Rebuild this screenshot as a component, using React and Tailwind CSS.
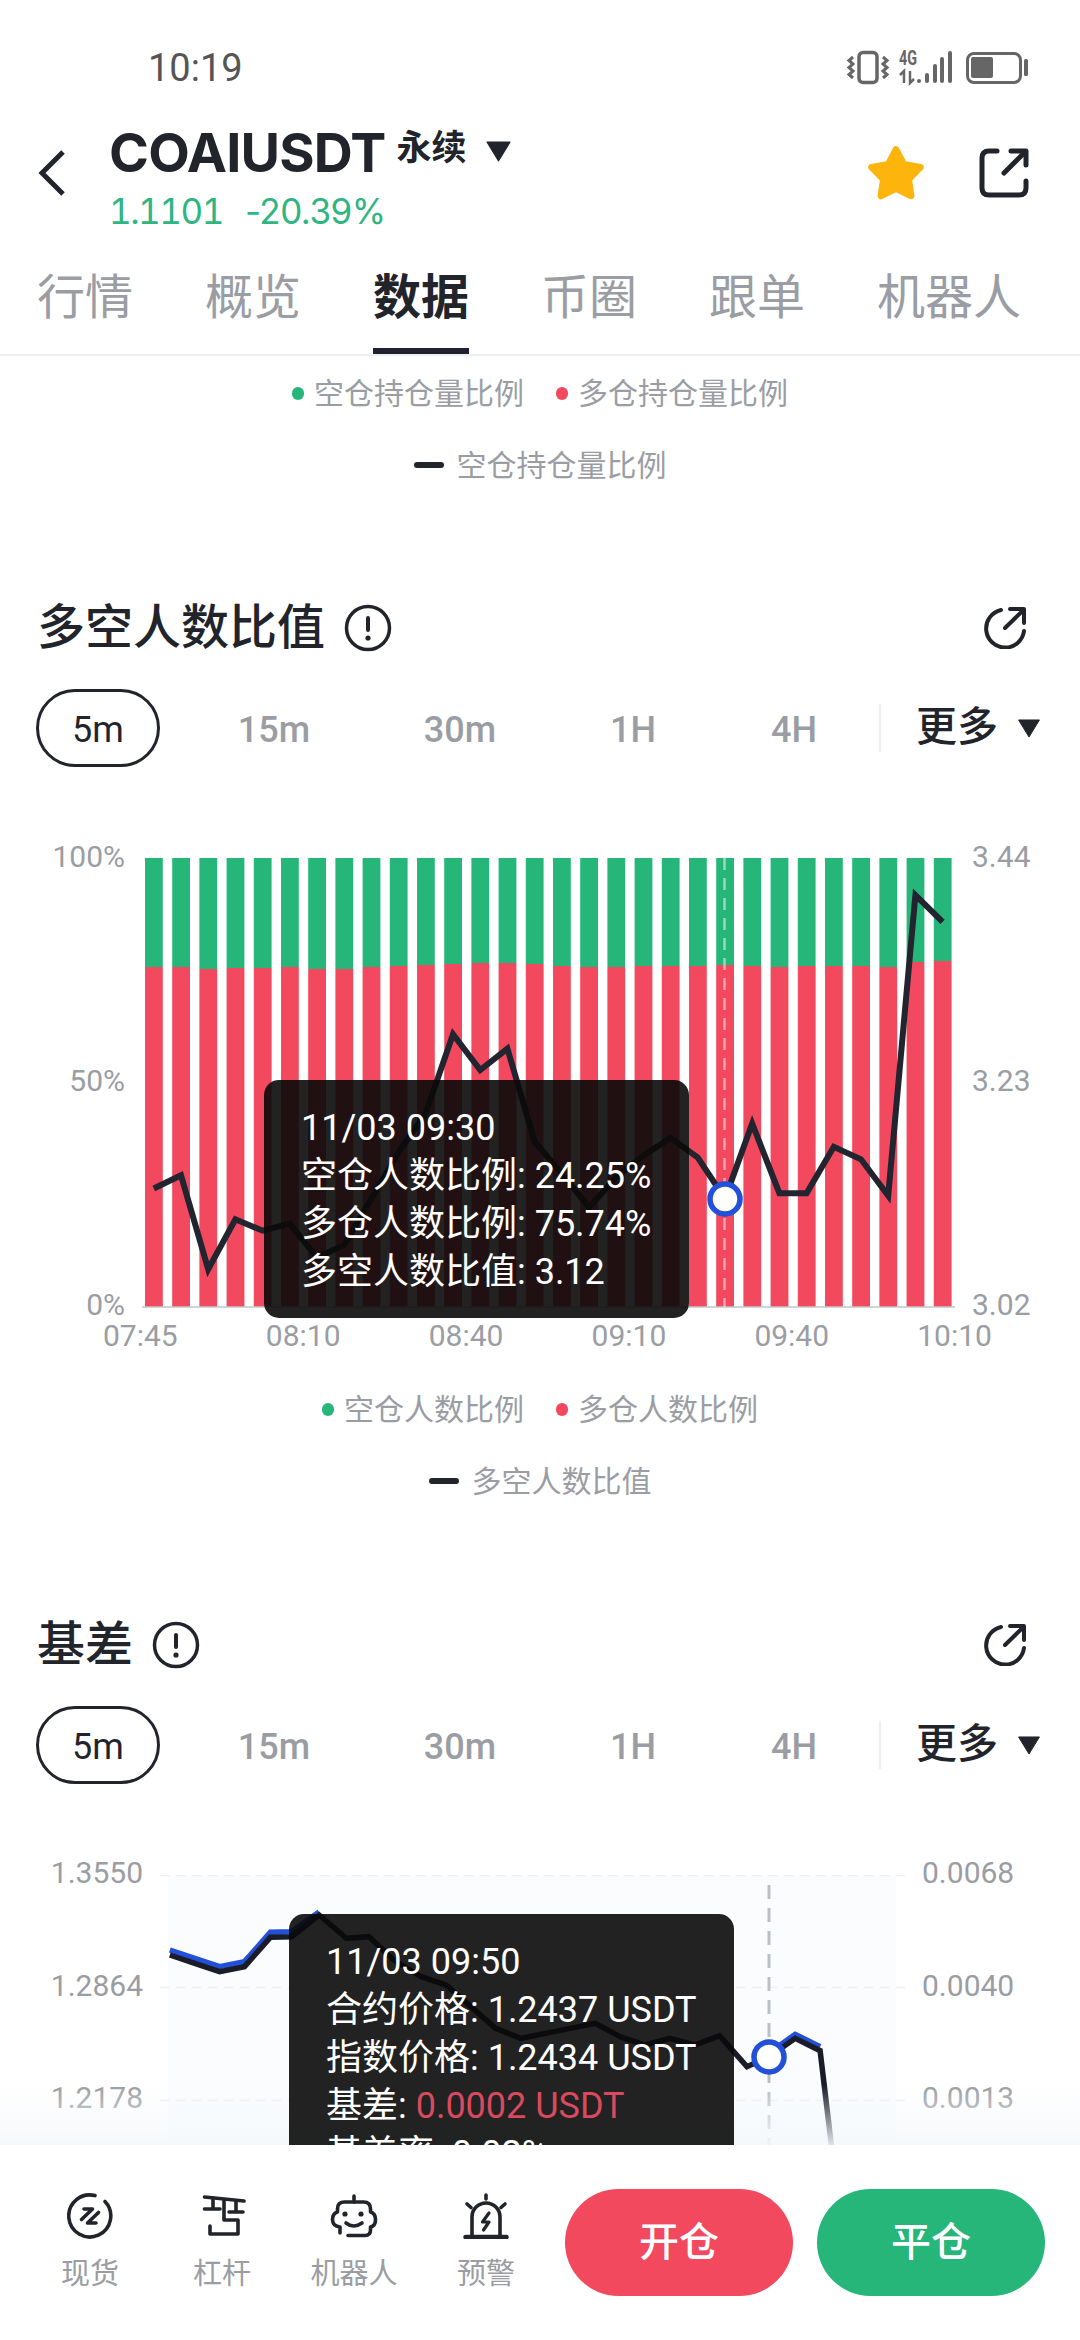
import React from "react";

const CJK = '"Noto Sans CJK SC"';
const sans = { fontFamily: `Roboto, ${CJK}, sans-serif` };

const splits = [967,967,969,968,968,967,969,969,967,966,965,964,963,963,964,966,967,967,966,966,966,965,966,967,966,966,966,967,962,961];
const barX = (i) => 145 + 27.2 * i;
const lineV = [1032,995,1258,1118,1150,1130,1225,1190,1060,930,820,600,700,640,900,990,1085,1000,940,890,945,1060,850,1045,1045,915,950,1052,210,285];
const line1 = lineV.map((v, i) => `${153.8 + 27.2 * i},${820 + v / 2.8}`).join(" ");

const raw2 = [[60,285],[110,310],[160,335],[210,320],[262,232],[305,230],[360,165],[415,235],[460,230],[510,300],[565,350],[615,375],[665,440],[715,505],[765,535],[815,520],[865,505],[915,490],[965,530],[1015,555],[1065,535],[1115,555],[1165,527],[1220,620],[1265,590],[1317,535],[1367,572],[1390,860],[1400,1100]];
const pts2 = raw2.map(([x, y]) => [140 + x / 2.01, 1860 + y / 3]);
const line2 = pts2.map((p) => p.join(",")).join(" ");
const line2b = pts2.slice(0, 7).map(([x, y], i) => `${x},${y - (i === 6 ? 3 : 5)}`).join(" ");
const line2c = pts2.slice(24, 27).map(([x, y]) => `${x},${y - 4}`).join(" ");

function Tri({ className }) {
  return (
    <svg viewBox="0 0 24 20" className={className}>
      <path d="M1 1 H23 L12 19 Z" fill="#22242b" stroke="#22242b" strokeWidth="1" strokeLinejoin="round" />
    </svg>
  );
}

function StatusIcons() {
  return (
    <svg viewBox="845 46 186 40" className="w-[186px] h-[40px]">
      <rect x="859" y="51.5" width="18" height="30" rx="4" fill="none" stroke="#666" strokeWidth="3.5" />
      <path d="M853 56 L849 59.5 L853 63 L849 66.5 L853 70 L849 73.5 L853 77" fill="none" stroke="#666" strokeWidth="3" />
      <path d="M883 56 L887 59.5 L883 63 L887 66.5 L883 70 L887 73.5 L883 77" fill="none" stroke="#666" strokeWidth="3" />
      <text x="899" y="63.5" fontSize="20" fontWeight="700" fill="#666" fontFamily="Roboto" textLength="18" lengthAdjust="spacingAndGlyphs">4G</text>
      <path d="M904 82 V70 L900 74 M910 70 V82 L914 78" fill="none" stroke="#666" strokeWidth="2.5" />
      {[[919,78],[927,72],[935,63],[942,56],[950,50]].map(([x, y]) => (
        <rect key={x} x={x - 2} y={y} width="4" height={82 - y} rx="2" fill="#666" />
      ))}
      <rect x="967.5" y="52.5" width="53" height="29" rx="6.5" fill="none" stroke="#666" strokeWidth="3" />
      <rect x="971" y="56" width="22" height="21" rx="2" fill="#666" />
      <rect x="1024" y="58" width="4" height="17" rx="1.5" fill="#666" />
    </svg>
  );
}

function BackIcon() {
  return (
    <svg viewBox="0 0 28 46" className="w-[28px] h-[46px]">
      <path d="M25 2 L4 23 L25 44" fill="none" stroke="#22242b" strokeWidth="5" />
    </svg>
  );
}

function Star() {
  return (
    <svg viewBox="2 2 52 50" className="w-[56px] h-[54px]">
      <polygon points="28,5 35.3,18.9 50.8,21.6 39.9,32.9 42.1,48.4 28,41.5 13.9,48.4 16.1,32.9 5.2,21.6 20.7,18.9" fill="#fdb50e" stroke="#fdb50e" strokeWidth="6" strokeLinejoin="round" />
    </svg>
  );
}

function ShareIcon() {
  return (
    <svg viewBox="0 0 50 50" className="w-[50px] h-[50px]" fill="none" stroke="#22242b" strokeWidth="5" strokeLinecap="round" strokeLinejoin="round">
      <path d="M18 3 H10 Q3 3 3 10 V40 Q3 47 10 47 H40 Q47 47 47 40 V33" />
      <path d="M32 3 H47 V17" />
      <path d="M25 25 L46 4" />
    </svg>
  );
}

function InfoIcon() {
  return (
    <svg viewBox="0 0 48 48" className="w-[48px] h-[48px]">
      <circle cx="24" cy="24" r="21.5" fill="none" stroke="#22242b" strokeWidth="3.5" />
      <rect x="22" y="12" width="4" height="16" rx="2" fill="#22242b" />
      <circle cx="24" cy="34" r="2.6" fill="#22242b" />
    </svg>
  );
}

function OpenIcon() {
  return (
    <svg viewBox="0 0 42 42" className="w-[42px] h-[42px]" fill="none" stroke="#22242b" strokeWidth="4" strokeLinecap="round" strokeLinejoin="round">
      <path d="M17 3 A19 19 0 1 0 40 24" />
      <path d="M26 2 H40 V16" />
      <path d="M21 21 L39 3.5" />
    </svg>
  );
}

function SectionHead({ title }) {
  return (
    <div className="h-[60px] flex items-center pl-[37px] pr-[54px]">
      <span className="text-[48px] leading-[60px] font-medium text-[#22242b]" style={sans}>{title}</span>
      <span className="ml-[19px] flex"><InfoIcon /></span>
      <span className="ml-auto flex"><OpenIcon /></span>
    </div>
  );
}

function TimeRow() {
  const t = "text-[36px] pt-[4px] text-center font-medium text-[#9a9da3]";
  return (
    <div className="h-[78px] flex items-center pl-[36px]" style={sans}>
      <div className="w-[124px] h-[78px] pt-[3px] rounded-full border-[3px] border-[#22242b] flex items-center justify-center text-[36px] text-[#22242b]">5m</div>
      <div className={`${t} w-[228px]`}>15m</div>
      <div className={`${t} w-[144px]`}>30m</div>
      <div className={`${t} w-[202px]`}>1H</div>
      <div className={`${t} w-[120px]`}>4H</div>
      <div className="ml-[25px] w-[2px] h-[48px] bg-[#eceef0]" />
      <div className="ml-[35px] text-[41px] font-medium text-[#22242b]">更多</div>
      <Tri className="ml-[19px] w-[24px] h-[19px]" />
    </div>
  );
}

function Legend({ items, dash }) {
  return (
    <div className="h-[40px] flex items-center justify-center gap-[32px] text-[30px] text-[#9a9da3]" style={sans}>
      {items && items.map(([c, label]) => (
        <div key={label} className="flex items-center gap-[10px]">
          <span className={`w-[12px] h-[13px] rounded-full ${c}`} />
          <span>{label}</span>
        </div>
      ))}
      {dash && (
        <div className="flex items-center gap-[13px]">
          <span className="w-[30px] h-[6px] rounded-full bg-[#22242b]" />
          <span>{dash}</span>
        </div>
      )}
    </div>
  );
}

function Tooltip({ className, children }) {
  return (
    <div className={`absolute z-10 rounded-[15px] bg-[rgba(10,10,10,0.9)] pl-[37px] pt-[24px] text-[36px] leading-[48px] text-white whitespace-nowrap ${className}`} style={sans}>
      {children}
    </div>
  );
}

function Chart1() {
  const lab = "h-[40px] text-[30px] leading-[40px] text-[#9a9da3]";
  return (
    <div className="relative">
      <div className="flex items-start h-[450px]" style={sans}>
        <div className="w-[142px] pr-[17px] h-[488px] -mt-[21px] flex flex-col justify-between text-right shrink-0">
          <div className={lab}>100%</div><div className={lab}>50%</div><div className={lab}>0%</div>
        </div>
        <svg viewBox="142 858 813 450" className="w-[813px] h-[450px] shrink-0">
          {splits.map((s, i) => (
            <g key={i}>
              <rect x={barX(i)} y="858" width="17.8" height={s - 858} fill="#26b67a" />
              <rect x={barX(i)} y={s} width="17.8" height={1307 - s} fill="#f3495f" />
            </g>
          ))}
          <line x1="142" x2="955" y1="1307" y2="1307" stroke="#c4c6ca" strokeWidth="1.5" />
          <line x1="724.5" x2="724.5" y1="858" y2="1307" stroke="rgba(255,255,255,0.5)" strokeWidth="2.5" strokeDasharray="12 8" />
          <polyline points={line1} fill="none" stroke="#22242f" strokeWidth="6" strokeLinejoin="miter" />
          <circle cx="725" cy="1199" r="15" fill="#fff" stroke="#2350d8" strokeWidth="5.5" />
        </svg>
        <div className="pl-[17px] h-[488px] -mt-[21px] flex flex-col justify-between">
          <div className={lab}>3.44</div><div className={lab}>3.23</div><div className={lab}>3.02</div>
        </div>
      </div>
      <div className="ml-[103px] w-[889px] mt-[8px] flex justify-between h-[40px] text-[30px] leading-[40px] text-[#9a9da3]" style={sans}>
        {["07:45","08:10","08:40","09:10","09:40","10:10"].map((t) => <span key={t}>{t}</span>)}
      </div>
      <Tooltip className="left-[264px] top-[222px] w-[425px] h-[238px]">
        <div>11/03 09:30</div>
        <div>空仓人数比例: 24.25%</div>
        <div>多仓人数比例: 75.74%</div>
        <div>多空人数比值: 3.12</div>
      </Tooltip>
    </div>
  );
}

function Chart2() {
  const lab = "h-[40px] text-[30px] leading-[40px] text-[#9a9da3]";
  return (
    <div className="relative flex items-start" style={sans}>
      <div className="w-[160px] pr-[17px] -mt-[22px] flex flex-col gap-[72.5px] text-right shrink-0">
        <div className={lab}>1.3550</div><div className={lab}>1.2864</div><div className={lab}>1.2178</div>
      </div>
      <svg viewBox="160 1875 745 340" className="w-[745px] h-[340px] shrink-0">
        <rect x="168" y="1875" width="728" height="340" fill="#fafcfe" />
        {[1875.5, 1987.5, 2100.5].map((y) => (
          <line key={y} x1="160" x2="905" y1={y} y2={y} stroke="#eef0f3" strokeWidth="1.5" strokeDasharray="10 6" />
        ))}
        <line x1="769" x2="769" y1="1885" y2="2145" stroke="#b9bfc7" strokeWidth="3" strokeDasharray="14 9" />
        <polyline points={line2b} fill="none" stroke="#2350d8" strokeWidth="5.5" />
        <polyline points={line2c} fill="none" stroke="#2350d8" strokeWidth="5.5" />
        <polyline points={line2} fill="none" stroke="#1a1c28" strokeWidth="5.5" />
        <circle cx="769" cy="2057" r="15" fill="#fff" stroke="#2350d8" strokeWidth="5.5" />
      </svg>
      <div className="pl-[17px] -mt-[22px] flex flex-col gap-[72.5px]">
        <div className={lab}>0.0068</div><div className={lab}>0.0040</div><div className={lab}>0.0013</div>
      </div>
      <Tooltip className="left-[289px] top-[39px] w-[445px] h-[290px]">
        <div>11/03 09:50</div>
        <div>合约价格: 1.2437 USDT</div>
        <div>指数价格: 1.2434 USDT</div>
        <div>基差: <span className="text-[#d94a5f]">0.0002 USDT</span></div>
        <div>基差率: 0.02%</div>
      </Tooltip>
    </div>
  );
}

const iconCls = "fill-none stroke-[#22242b]";

function SpotIcon() {
  return (
    <svg viewBox="0 0 46 46" className={`w-[46px] h-[46px] ${iconCls}`} strokeWidth="3.6" strokeLinecap="round" strokeLinejoin="round">
      <path d="M28 2.6 A21 21 0 1 0 38 8.5" />
      <path d="M17 16 H25.5 L14.5 26.5" />
      <path d="M31.5 19.5 L20.5 30 H29" />
    </svg>
  );
}
function LeverIcon() {
  return (
    <svg viewBox="0 0 48 46" className={`w-[48px] h-[46px] ${iconCls}`} strokeWidth="3.6" strokeLinecap="round" strokeLinejoin="round">
      <path d="M6.5 4 L46 8" />
      <path d="M15 5 V16 M6.5 16 H22" />
      <path d="M38 8 V19 M31 19 H45" />
      <path d="M26 7 V27 H40 V41 H12 V33" />
    </svg>
  );
}
function RobotIcon() {
  return (
    <svg viewBox="0 0 48 46" className={`w-[48px] h-[46px] ${iconCls}`} strokeWidth="3.6" strokeLinecap="round" strokeLinejoin="round">
      <path d="M24 9 V3" />
      <path d="M10 40 V34 Q2.5 33 2.5 26.5 Q2.5 20.5 7.5 19 V16 Q7.5 9 14.5 9 H33.5 Q40.5 9 40.5 16 V19 Q45.5 20.5 45.5 26.5 Q45.5 33 40.5 34 V37 Q40.5 42.5 35 42.5 H18" />
      <circle cx="15" cy="21" r="2.6" className="fill-[#22242b] stroke-none" />
      <circle cx="31" cy="21" r="2.6" className="fill-[#22242b] stroke-none" />
      <path d="M16 30 Q23.5 36 32 30" />
    </svg>
  );
}
function AlarmIcon() {
  return (
    <svg viewBox="0 0 46 46" className={`w-[46px] h-[46px] ${iconCls}`} strokeWidth="3.6" strokeLinecap="round" strokeLinejoin="round">
      <path d="M2.5 44 H43.5" strokeWidth="4.5" />
      <path d="M9 43 V24 A14 14 0 0 1 37 24 V43" />
      <path d="M23 2 V6 M4 11 L8 14.5 M42 11 L38 14.5" />
      <path d="M26 20 L19.5 29 H26 L20.5 37" strokeWidth="3.2" />
    </svg>
  );
}

function BottomBar() {
  const items = [[<SpotIcon />, "现货"], [<LeverIcon />, "杠杆"], [<RobotIcon />, "机器人"], [<AlarmIcon />, "预警"]];
  return (
    <div className="relative z-20 h-[195px] shrink-0 bg-white flex items-start pt-[44px] pl-[24px]" style={sans}>
      {items.map(([ic, l]) => (
        <div key={l} className="w-[132px] pt-[4px] flex flex-col items-center">
          <div className="h-[46px] flex items-center">{ic}</div>
          <div className="mt-[15px] h-[40px] text-[29px] leading-[40px] text-[#9a9da3]">{l}</div>
        </div>
      ))}
      <div className="ml-[13px] w-[228px] h-[107px] rounded-full bg-[#f3495f] flex items-center justify-center text-[40px] font-medium text-white">开仓</div>
      <div className="ml-[24px] w-[228px] h-[107px] rounded-full bg-[#26b67a] flex items-center justify-center text-[40px] font-medium text-white">平仓</div>
    </div>
  );
}

export default function App() {
  const tabs = ["行情", "概览", "数据", "币圈", "跟单", "机器人"];
  const inter = { fontFamily: `Inter, ${CJK}, sans-serif` };
  return (
    <div className="relative w-[1080px] h-[2340px] overflow-hidden bg-white flex flex-col" style={sans}>
      <div className="h-[120px] pt-[16px] pl-[148px] pr-[49px] flex items-center justify-between shrink-0">
        <span className="text-[38px] text-[#555]">10:19</span>
        <span className="flex -mt-[2px]"><StatusIcons /></span>
      </div>

      <div className="h-[120px] flex items-center pl-[38px] pr-[51px] shrink-0">
        <div className="w-[71px] -mt-[14px] shrink-0 flex"><BackIcon /></div>
        <div className="self-start pt-[6px]">
          <div className="flex items-center h-[54px]">
            <span className="text-[54px] leading-[54px] font-bold tracking-[-0.8px] text-[#22242b]" style={inter}>COAIUSDT</span>
            <span className="ml-[11px] -mt-[8px] text-[35px] font-bold text-[#22242b]">永续</span>
            <Tri className="ml-[18px] -mt-[4px] w-[27px] h-[21px]" />
          </div>
          <div className="mt-[9px] h-[44px] text-[35px] leading-[44px] text-[#2eb582] flex gap-[22px]" style={inter}>
            <span className="tabular-nums tracking-[-1.5px]">1.1101</span><span className="tracking-[-0.5px]">-20.39%</span>
          </div>
        </div>
        <div className="ml-auto -mt-[14px] flex"><Star /></div>
        <div className="ml-[55px] -mt-[14px] flex"><ShareIcon /></div>
      </div>

      <div className="h-[116px] border-b-[2px] border-[#eeeff1] flex pl-[37px] gap-[72px] shrink-0">
        {tabs.map((t) => (
          <div key={t} className={`h-[114px] pt-[33px] text-[48px] leading-[50px] ${t === "数据" ? "border-b-[6px] border-[#1f2130] font-bold text-[#22242b]" : "text-[#9a9da3]"}`}>{t}</div>
        ))}
      </div>

      <div className="relative flex-1 min-h-0 overflow-hidden">
        <div className="pt-[17px]">
          <Legend items={[["bg-[#26b67a]", "空仓持仓量比例"], ["bg-[#f3495f]", "多仓持仓量比例"]]} />
          <div className="mt-[32px]"><Legend dash="空仓持仓量比例" /></div>
          <div className="mt-[113px]"><SectionHead title="多空人数比值" /></div>
          <div className="mt-[31px]"><TimeRow /></div>
          <div className="mt-[91px]"><Chart1 /></div>
          <div className="mt-[33px]"><Legend items={[["bg-[#26b67a]", "空仓人数比例"], ["bg-[#f3495f]", "多仓人数比例"]]} /></div>
          <div className="mt-[32px]"><Legend dash="多空人数比值" /></div>
          <div className="mt-[114px]"><SectionHead title="基差" /></div>
          <div className="mt-[31px]"><TimeRow /></div>
          <div className="mt-[91px]"><Chart2 /></div>
        </div>
        <div className="absolute z-[5] bottom-0 left-0 right-0 h-[60px] bg-gradient-to-b from-[rgba(245,248,251,0)] to-[rgba(245,248,251,0.9)]" />
      </div>

      <BottomBar />
    </div>
  );
}
